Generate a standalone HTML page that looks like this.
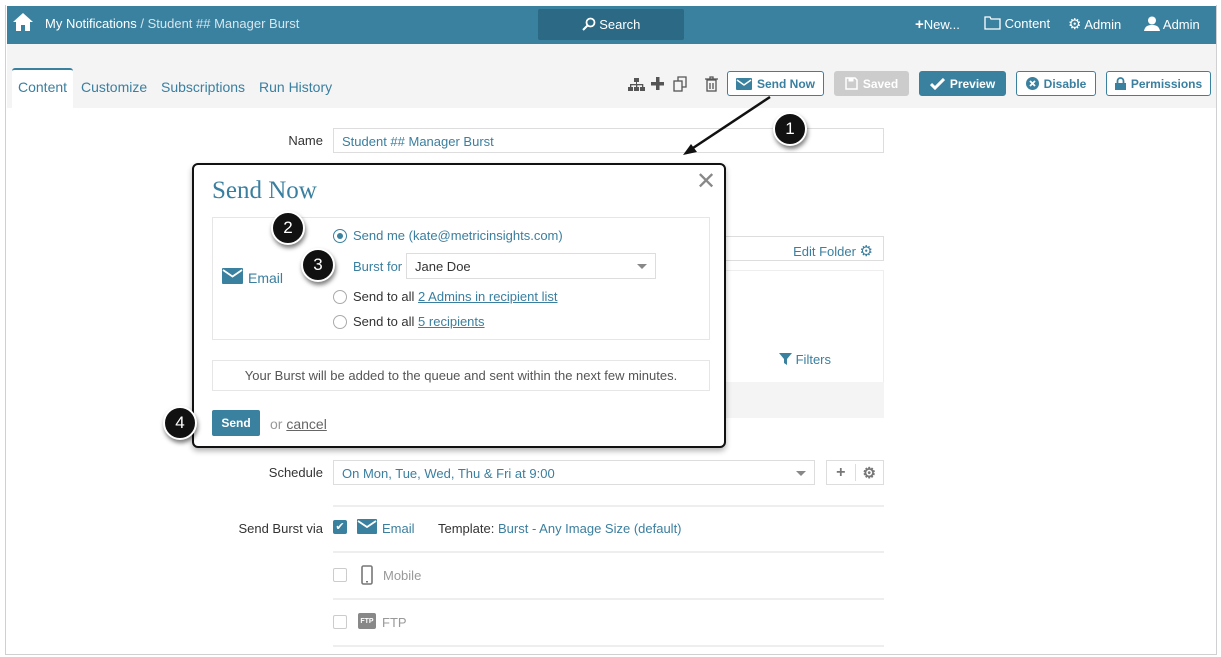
<!DOCTYPE html>
<html><head><style>
*{box-sizing:border-box;margin:0;padding:0}
body{width:1221px;height:657px;background:#fff;font-family:"Liberation Sans",sans-serif;font-size:13px;color:#333;position:relative;overflow:hidden}
.a{position:absolute}
.frame{left:5px;top:5px;width:1212px;height:650px;border:1px solid #d0d0d0;border-top:none}
.top{left:7px;top:6px;width:1209px;height:38px;background:#3a819f;color:#fff}
.sub{left:7px;top:44px;width:1209px;height:64px;background:#f4f4f4}
.tab{font-size:14px;color:#3a7f9f;top:79px}
.btn{top:71px;height:25px;border:1px solid #3a819f;border-radius:3px;font-size:12px;font-weight:bold;color:#3a7f9f;background:#fff;display:flex;align-items:center;justify-content:center;gap:5px}
.lbl{font-size:13px;color:#333;text-align:right;width:150px}
.inp{border:1px solid #ddd;background:#fff;height:25px;font-size:13px;color:#3a7f9f;padding:5px 8px}
.circ{width:34px;height:34px;border-radius:50%;background:#111;color:#fff;font-size:17px;text-align:center;line-height:30px;border:2px solid #fff;box-shadow:1px 3px 4px rgba(0,0,0,.5)}
.hr{height:2px;background:#eee;left:333px;width:551px}
.rad{width:14px;height:14px;border:1px solid #aaa;border-radius:50%;background:#fff}
.lnk{color:#3a7f9f;text-decoration:underline}
.car{position:absolute;right:8px;top:10px;width:0;height:0;border-left:5px solid transparent;border-right:5px solid transparent;border-top:5px solid #888}
</style></head><body>
<div class="a frame"></div>
<div class="a top">
 <svg class="a" style="left:5px;top:6px" width="22" height="20" viewBox="0 0 22 20"><path d="M11 1L1 10h3v9h5v-6h4v6h5v-9h3z" fill="#fff"/></svg>
 <div class="a" style="left:38px;top:10px;font-size:13px">My Notifications <span style="color:#d6e6ee">/ Student ## Manager Burst</span></div>
 <div class="a" style="left:531px;top:3px;width:146px;height:31px;background:#2c6985;border-radius:2px;text-align:center;line-height:31px;font-size:13px">
  <svg width="14" height="14" viewBox="0 0 14 14" style="vertical-align:-2px"><circle cx="8.5" cy="5.5" r="4" fill="none" stroke="#fff" stroke-width="1.8"/><path d="M5.5 8.5L1 13" stroke="#fff" stroke-width="2"/></svg> Search</div>
 <div class="a" style="left:908px;top:10px;font-size:13px"><b style="font-size:15px">+</b>New...</div>
 <div class="a" style="left:977px;top:10px;font-size:13px"><svg width="17" height="14" viewBox="0 0 17 14" style="vertical-align:-2px"><path d="M1 1h5l1 2h9v10H1z" fill="none" stroke="#fff" stroke-width="1.3"/></svg> Content</div>
 <div class="a" style="left:1061px;top:9px;font-size:13px"><span style="font-size:15px">⚙</span> Admin</div>
 <div class="a" style="left:1137px;top:10px;font-size:13px"><svg width="16" height="15" viewBox="0 0 16 15" style="vertical-align:-2px"><circle cx="8" cy="4.5" r="4" fill="#fff"/><path d="M0 15c1-5 4-6 8-6s7 1 8 6z" fill="#fff"/></svg> Admin</div>
</div>
<div class="a sub"></div>
<div class="a" style="left:12px;top:68px;width:61px;height:40px;background:#fff;border-top:2px solid #3a819f;border-radius:3px 3px 0 0"></div>
<div class="a tab" style="left:18px">Content</div>
<div class="a tab" style="left:81px">Customize</div>
<div class="a tab" style="left:161px">Subscriptions</div>
<div class="a tab" style="left:259px">Run History</div>
<svg class="a" style="left:628px;top:75px" width="92" height="18" viewBox="0 0 92 18">
 <g fill="#555"><rect x="6" y="3" width="5" height="4"/><rect x="8" y="7" width="1" height="3"/><rect x="2" y="9" width="13" height="1.3"/><rect x="2" y="9" width="1.3" height="4"/><rect x="8" y="9" width="1.3" height="4"/><rect x="14" y="9" width="1.3" height="4"/><rect x="0" y="12" width="5" height="4"/><rect x="6" y="12" width="5" height="4"/><rect x="12" y="12" width="5" height="4"/>
 <rect x="28" y="2" width="3.5" height="13"/><rect x="23" y="7" width="13" height="3.5"/></g>
 <g fill="none" stroke="#555" stroke-width="1.3"><rect x="46" y="6" width="8" height="10"/><path d="M50 6V2h8v10h-4"/><rect x="79" y="5" width="9" height="11"/><path d="M77 4h13M82 4V2h3v2M82 8v6M85 8v6"/></g>
</svg>
<div class="a btn" style="left:727px;width:97px"><svg width="16" height="12" viewBox="0 0 16 12"><rect width="16" height="12" rx="1" fill="#3a819f"/><path d="M1 2l7 5 7-5" fill="none" stroke="#fff" stroke-width="1.5"/></svg>Send Now</div>
<div class="a btn" style="left:834px;width:75px;background:#ccc;border-color:#ccc;color:#fff"><svg width="13" height="13" viewBox="0 0 13 13"><path d="M1 1h9l2 2v9H1z" fill="none" stroke="#fff" stroke-width="1.5"/><rect x="3.5" y="1" width="5" height="3.5" fill="#fff"/></svg> Saved</div>
<div class="a btn" style="left:919px;width:87px;background:#3a819f;color:#fff"><svg width="15" height="12" viewBox="0 0 15 12"><path d="M1 6l4 4 9-9" fill="none" stroke="#fff" stroke-width="3"/></svg> Preview</div>
<div class="a btn" style="left:1016px;width:80px"><svg width="13" height="13" viewBox="0 0 13 13"><circle cx="6.5" cy="6.5" r="6.5" fill="#3a819f"/><path d="M4 4l5 5M9 4l-5 5" stroke="#fff" stroke-width="1.8"/></svg>Disable</div>
<div class="a btn" style="left:1106px;width:105px"><svg width="11" height="13" viewBox="0 0 11 13"><rect y="6" width="11" height="7" fill="#3a819f"/><path d="M2.5 6V4a3 3 0 016 0v2" fill="none" stroke="#3a819f" stroke-width="1.8"/></svg>Permissions</div>

<div class="a lbl" style="left:173px;top:133px">Name</div>
<div class="a inp" style="left:333px;top:128px;width:551px">Student ## Manager Burst</div>
<div class="a inp" style="left:700px;top:236px;width:184px;text-align:right;padding-right:10px">Edit Folder <span style="font-size:15px">⚙</span></div>
<div class="a" style="left:700px;top:270px;width:184px;height:148px;border:1px solid #eee;background:#fff"></div>
<div class="a" style="left:700px;top:382px;width:184px;height:36px;background:#f4f4f4"></div>
<div class="a" style="left:779px;top:352px;color:#3a7f9f"><svg width="13" height="12" viewBox="0 0 13 12" style="vertical-align:-1px"><path d="M0 0h13L8 6v6L5 10V6z" fill="#3a819f"/></svg> Filters</div>

<div class="a lbl" style="left:173px;top:465px">Schedule</div>
<div class="a inp" style="left:333px;top:460px;width:482px">On Mon, Tue, Wed, Thu &amp; Fri at 9:00<span class="car"></span></div>
<div class="a inp" style="left:826px;top:460px;width:58px;color:#777;font-weight:bold;padding:3px 0;display:flex"><span style="flex:1;text-align:center;font-size:16px;border-right:1px solid #ddd">+</span><span style="flex:1;text-align:center;font-size:15px">⚙</span></div>
<div class="a hr" style="top:505px"></div>
<div class="a lbl" style="left:173px;top:521px">Send Burst via</div>
<div class="a" style="left:333px;top:520px;width:14px;height:14px;background:#3a819f;border-radius:2px;color:#fff;font-size:11px;text-align:center;line-height:14px">✔</div>
<svg class="a" style="left:357px;top:519px" width="20" height="15" viewBox="0 0 20 15"><rect width="20" height="15" rx="1" fill="#3a819f"/><path d="M1 2l9 6 9-6" fill="none" stroke="#fff" stroke-width="1.8"/></svg>
<div class="a" style="left:382px;top:521px;color:#3a7f9f">Email</div>
<div class="a" style="left:438px;top:521px">Template: <span style="color:#3a7f9f">Burst - Any Image Size (default)</span></div>
<div class="a hr" style="top:551px"></div>
<div class="a" style="left:333px;top:568px;width:14px;height:14px;border:1px solid #ccc;border-radius:2px"></div>
<svg class="a" style="left:361px;top:565px" width="12" height="20" viewBox="0 0 12 20"><rect x="1" y="1" width="10" height="18" rx="1.5" fill="none" stroke="#777" stroke-width="1.6"/><rect x="5" y="16" width="2" height="1.5" fill="#777"/></svg>
<div class="a" style="left:383px;top:568px;color:#999">Mobile</div>
<div class="a hr" style="top:598px"></div>
<div class="a" style="left:333px;top:615px;width:14px;height:14px;border:1px solid #ccc;border-radius:2px"></div>
<div class="a" style="left:358px;top:613px;width:18px;height:16px;background:#888;border-radius:2px;color:#fff;font-size:7px;font-weight:bold;text-align:center;line-height:18px">FTP</div>
<div class="a" style="left:382px;top:615px;color:#999">FTP</div>
<div class="a hr" style="top:645px"></div>

<svg class="a" style="left:0;top:0" width="1221" height="657"><line x1="770" y1="97" x2="690" y2="150" stroke="#111" stroke-width="2.5"/><path d="M683 155l14-3-6-8z" fill="#111"/></svg>
<div class="a circ" style="left:773px;top:112px">1</div>

<div class="a" style="left:192px;top:163px;width:534px;height:285px;background:#fff;border:2px solid #111;border-radius:6px;box-shadow:0 3px 6px rgba(0,0,0,.3)">
 <div class="a" style="left:18px;top:12px;font-family:'Liberation Serif',serif;font-size:25px;color:#3a7f9f">Send Now</div>
 <div class="a" style="left:502px;top:2px;font-size:24px;color:#888">✕</div>
 <div class="a" style="left:18px;top:52px;width:498px;height:123px;border:1px solid #e6e6e6"></div>
 <svg class="a" style="left:28px;top:103px" width="21" height="16" viewBox="0 0 21 16"><rect width="21" height="16" rx="1" fill="#3a819f"/><path d="M1 2l9.5 6.5L20 2" fill="none" stroke="#fff" stroke-width="1.8"/></svg>
 <div class="a" style="left:54px;top:105px;color:#3a7f9f;font-size:14px">Email</div>
 <div class="a rad" style="left:139px;top:64px;border-color:#3a819f"><div style="width:6px;height:6px;border-radius:50%;background:#3a819f;margin:3px"></div></div>
 <div class="a" style="left:159px;top:63px;color:#3a7f9f">Send me (kate@metricinsights.com)</div>
 <div class="a" style="left:159px;top:94px;color:#3a7f9f">Burst for</div>
 <div class="a inp" style="left:212px;top:88px;width:250px;height:26px;color:#333">Jane Doe<span class="car"></span></div>
 <div class="a rad" style="left:139px;top:125px"></div>
 <div class="a" style="left:159px;top:124px">Send to all <span class="lnk">2 Admins in recipient list</span></div>
 <div class="a rad" style="left:139px;top:150px"></div>
 <div class="a" style="left:159px;top:149px">Send to all <span class="lnk">5 recipients</span></div>
 <div class="a" style="left:18px;top:195px;width:498px;height:31px;border:1px solid #e6e6e6;text-align:center;line-height:30px;color:#555">Your Burst will be added to the queue and sent within the next few minutes.</div>
 <div class="a" style="left:18px;top:245px;width:48px;height:26px;background:#3a819f;color:#fff;font-weight:bold;font-size:12px;text-align:center;line-height:26px;border-radius:2px">Send</div>
 <div class="a" style="left:76px;top:251px;color:#999;font-size:14px">or <span style="color:#666;text-decoration:underline">cancel</span></div>
</div>
<div class="a circ" style="left:271px;top:211px">2</div>
<div class="a circ" style="left:301px;top:248px">3</div>
<div class="a circ" style="left:163px;top:406px">4</div>
</body></html>
